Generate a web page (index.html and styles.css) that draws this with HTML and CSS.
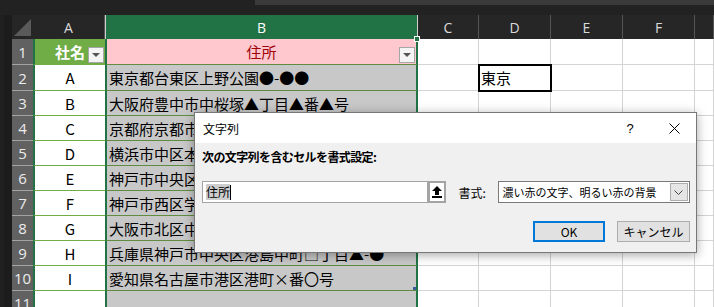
FILE: index.html
```html
<!DOCTYPE html>
<html lang="ja">
<head>
    <meta charset="UTF-8">
    <title>文字列 - 条件付き書式</title>
    <link rel="stylesheet" href="styles.css">
</head>
<body>

    <div class="topbar"><div class="topbar-fill"></div></div>

    <div class="sheet">
        <div class="strip"></div>

        <!-- column headers -->
        <div class="colhead corner"></div>
        <div class="colhead">A</div>
        <div class="colhead sel">B<span class="fill-handle"></span></div>
        <div class="colhead">C</div>
        <div class="colhead">D</div>
        <div class="colhead">E</div>
        <div class="colhead">F</div>
        <div class="colhead"></div>

        <!-- row 1 -->
        <div class="rowhead">1</div>
        <div class="cell a head-a">社名<span class="filter"></span></div>
        <div class="cell b head-b">住所<span class="filter"></span></div>
        <div class="cell"></div><div class="cell"></div><div class="cell"></div><div class="cell"></div><div class="cell"></div>

        <div class="rowhead">2</div>
        <div class="cell a">A</div>
        <div class="cell b">東京都台東区上野公園●-●●</div>
        <div class="cell"></div><div class="cell active">東京</div><div class="cell"></div><div class="cell"></div><div class="cell"></div>

        <div class="rowhead">3</div>
        <div class="cell a">B</div>
        <div class="cell b">大阪府豊中市中桜塚▲丁目▲番▲号</div>
        <div class="cell"></div><div class="cell"></div><div class="cell"></div><div class="cell"></div><div class="cell"></div>

        <div class="rowhead">4</div>
        <div class="cell a">C</div>
        <div class="cell b">京都府京都市中京区寺町通御池</div>
        <div class="cell"></div><div class="cell"></div><div class="cell"></div><div class="cell"></div><div class="cell"></div>

        <div class="rowhead">5</div>
        <div class="cell a">D</div>
        <div class="cell b">横浜市中区本町</div>
        <div class="cell"></div><div class="cell"></div><div class="cell"></div><div class="cell"></div><div class="cell"></div>

        <div class="rowhead">6</div>
        <div class="cell a">E</div>
        <div class="cell b">神戸市中央区加納町</div>
        <div class="cell"></div><div class="cell"></div><div class="cell"></div><div class="cell"></div><div class="cell"></div>

        <div class="rowhead">7</div>
        <div class="cell a">F</div>
        <div class="cell b">神戸市西区学園東町</div>
        <div class="cell"></div><div class="cell"></div><div class="cell"></div><div class="cell"></div><div class="cell"></div>

        <div class="rowhead">8</div>
        <div class="cell a">G</div>
        <div class="cell b">大阪市北区中之島</div>
        <div class="cell"></div><div class="cell"></div><div class="cell"></div><div class="cell"></div><div class="cell"></div>

        <div class="rowhead">9</div>
        <div class="cell a">H</div>
        <div class="cell b">兵庫県神戸市中央区港島中町□丁目▲-●</div>
        <div class="cell"></div><div class="cell"></div><div class="cell"></div><div class="cell"></div><div class="cell"></div>

        <div class="rowhead">10</div>
        <div class="cell a">I</div>
        <div class="cell b last">愛知県名古屋市港区港町×番〇号</div>
        <div class="cell"></div><div class="cell"></div><div class="cell"></div><div class="cell"></div><div class="cell"></div>

        <div class="rowhead">11</div>
        <div class="cell a blank"></div>
        <div class="cell b blank"></div>
        <div class="cell"></div><div class="cell"></div><div class="cell"></div><div class="cell"></div><div class="cell"></div>
    </div>

    <div class="dialog">
        <div class="dialog-title">
            <span class="title-text">文字列</span>
            <span class="title-btn">?</span>
            <span class="title-btn">
                <svg width="11" height="11" viewBox="0 0 11 11"><path d="M0.5 0.5 L10.5 10.5 M10.5 0.5 L0.5 10.5" stroke="#000" stroke-width="1" fill="none"/></svg>
            </span>
        </div>
        <div class="dialog-body">
            <div class="prompt">次の文字列を含むセルを書式設定:</div>
            <div class="input-row">
                <div class="field"><span class="picked">住所</span><span class="caret"></span></div>
                <div class="ref-btn">
                    <svg width="10" height="12" viewBox="0 0 10 12"><path d="M5 0 L10 5 L7 5 L7 9 L3 9 L3 5 L0 5 Z" fill="#000"/><rect x="0" y="10" width="10" height="2" fill="#000"/></svg>
                </div>
                <span class="fmt-label">書式:</span>
                <div class="select">
                    <span class="select-text">濃い赤の文字、明るい赤の背景</span>
                    <span class="select-btn">
                        <svg width="9" height="5" viewBox="0 0 9 5"><path d="M0.5 0.5 L4.5 4.5 L8.5 0.5" stroke="#444" stroke-width="1" fill="none"/></svg>
                    </span>
                </div>
            </div>
            <div class="button-row">
                <button class="btn ok">OK</button>
                <button class="btn">キャンセル</button>
            </div>
        </div>
    </div>

</body>
</html>
```

FILE: styles.css
```css
* {
    box-sizing: border-box;
}
body {
    margin: 0;
    width: 714px;
    height: 307px;
    overflow: hidden;
    position: relative;
    background: #1d1d1d;
    font-family: "Noto Sans CJK JP", sans-serif;
}
.topbar {
    height: 15px;
    background: #222;
    display: flex;
    justify-content: flex-end;
}
.topbar-fill {
    width: 459px;
    height: 5px;
    background: #3a3a3a;
}
.sheet {
    display: grid;
    grid-template-columns: 12px 21px 72px 313px 61px 72px 72px 72px 19px;
    grid-template-rows: 24px 26px 26px repeat(8, 25px) 25px;
}
.strip {
    grid-row: 1 / span 12;
    background: #1c1c1c;
    border-left: 4px solid #202020;
}
.colhead {
    background: #262626;
    color: #dadada;
    font-family: "Open Sans", sans-serif;
    font-size: 14px;
    display: flex;
    align-items: center;
    justify-content: center;
    border-right: 1px solid #555;
    position: relative;
}
.colhead.corner {
    border-right: none;
}
.colhead.corner::after {
    content: "";
    position: absolute;
    left: 2px;
    top: 4px;
    width: 17px;
    height: 17px;
    background: #5a5a5a;
    clip-path: polygon(100% 0, 100% 100%, 0 100%);
}
.colhead.sel {
    background: #217346;
    color: #fff;
    border-left: 1px solid #cfcfcf;
    border-right: 1px solid #cfcfcf;
}
.fill-handle {
    position: absolute;
    right: -3px;
    bottom: -3px;
    width: 6px;
    height: 6px;
    background: #217346;
    border: 1px solid #fff;
    z-index: 2;
}
.rowhead {
    background: #616161;
    color: #ececec;
    font-family: "Open Sans", sans-serif;
    font-size: 15px;
    display: flex;
    align-items: center;
    justify-content: center;
    border-bottom: 1px solid #a3a3a3;
}
.cell {
    background: #fff;
    border-right: 1px solid #d4d4d4;
    border-bottom: 1px solid #d4d4d4;
    font-size: 15px;
    color: #000;
    display: flex;
    align-items: center;
    white-space: nowrap;
    overflow: hidden;
    position: relative;
}
.cell.a {
    border-left: 2px solid #217346;
    border-right: none;
    border-bottom: 1px solid #70ad47;
    justify-content: center;
    overflow: visible;
}
.cell.b {
    background: #c8c8c8;
    border-left: 2px solid #217346;
    border-right: 2px solid #217346;
    border-bottom: 1px solid #5f8c40;
    padding-left: 2px;
}
.cell.b.last::after {
    content: "";
    position: absolute;
    right: 0;
    bottom: 0;
    width: 3px;
    height: 3px;
    background: #3a5a9a;
}
.cell.blank {
    border-bottom: 1px solid #d4d4d4;
}
.cell.b.blank {
    border-bottom: none;
}
.cell.head-a {
    background: #70ad47;
    color: #fff;
    font-weight: bold;
}
.cell.head-b {
    background: #ffc7ce;
    color: #9c0006;
    justify-content: center;
    padding-left: 0;
}
.filter {
    position: absolute;
    right: 1px;
    bottom: 1px;
    width: 16px;
    height: 16px;
    background: #f4f4f4;
    border: 1px solid #a6a6a6;
}
.filter::after {
    content: "";
    position: absolute;
    left: 3px;
    top: 5px;
    border-left: 4px solid transparent;
    border-right: 4px solid transparent;
    border-top: 4px solid #555;
}
.cell.active {
    outline: 2px solid #000;
    outline-offset: -1px;
    padding-left: 2px;
    z-index: 1;
}

/* dialog */
.dialog {
    position: absolute;
    left: 194px;
    top: 112px;
    width: 503px;
    height: 141px;
    background: #f0f0f0;
    border: 1px solid #777;
    box-shadow: 0 2px 10px rgba(0, 0, 0, 0.35);
    font-size: 12px;
    color: #000;
    z-index: 5;
    white-space: nowrap;
}
.dialog-title {
    height: 30px;
    background: #fff;
    display: flex;
    align-items: center;
    padding-left: 8px;
}
.title-text {
    flex: 1;
}
.title-btn {
    width: 44px;
    height: 30px;
    display: flex;
    align-items: center;
    justify-content: center;
    font-family: "Liberation Sans", sans-serif;
    font-size: 13px;
}
.dialog-body {
    padding: 7px 6px 0 7px;
}
.prompt {
    font-weight: bold;
    line-height: 14px;
    letter-spacing: -0.6px;
}
.input-row {
    display: flex;
    align-items: center;
    margin-top: 17px;
    height: 22px;
}
.field {
    width: 226px;
    height: 22px;
    background: #fff;
    border: 1px solid #a4a4a4;
    display: flex;
    align-items: center;
    padding-left: 3px;
}
.picked {
    background: #cdcdcd;
    line-height: 16px;
}
.caret {
    width: 1px;
    height: 15px;
    background: #000;
}
.ref-btn {
    width: 19px;
    height: 22px;
    border: 2px solid #a4a4a4;
    background: #fff;
    display: flex;
    align-items: center;
    justify-content: center;
}
.fmt-label {
    margin-left: 12px;
    width: 40px;
}
.select {
    width: 192px;
    height: 22px;
    background: #fff;
    border: 1px solid #7a7a7a;
    display: flex;
    align-items: center;
    padding-left: 3px;
}
.select-text {
    flex: 1;
    font-size: 11px;
    overflow: hidden;
}
.select-btn {
    width: 18px;
    height: 18px;
    margin-right: 1px;
    background: #e5e5e5;
    border: 1px solid #adadad;
    display: flex;
    align-items: center;
    justify-content: center;
}
.button-row {
    display: flex;
    justify-content: flex-end;
    gap: 12px;
    margin-top: 18px;
}
button {
    font-family: "Noto Sans CJK JP", sans-serif;
    font-size: 12px;
    color: #000;
    background: #e1e1e1;
    border: 1px solid #adadad;
    width: 73px;
    height: 21px;
    padding: 0;
}
button.ok {
    width: 72px;
    border: 2px solid #0078d7;
}
```
